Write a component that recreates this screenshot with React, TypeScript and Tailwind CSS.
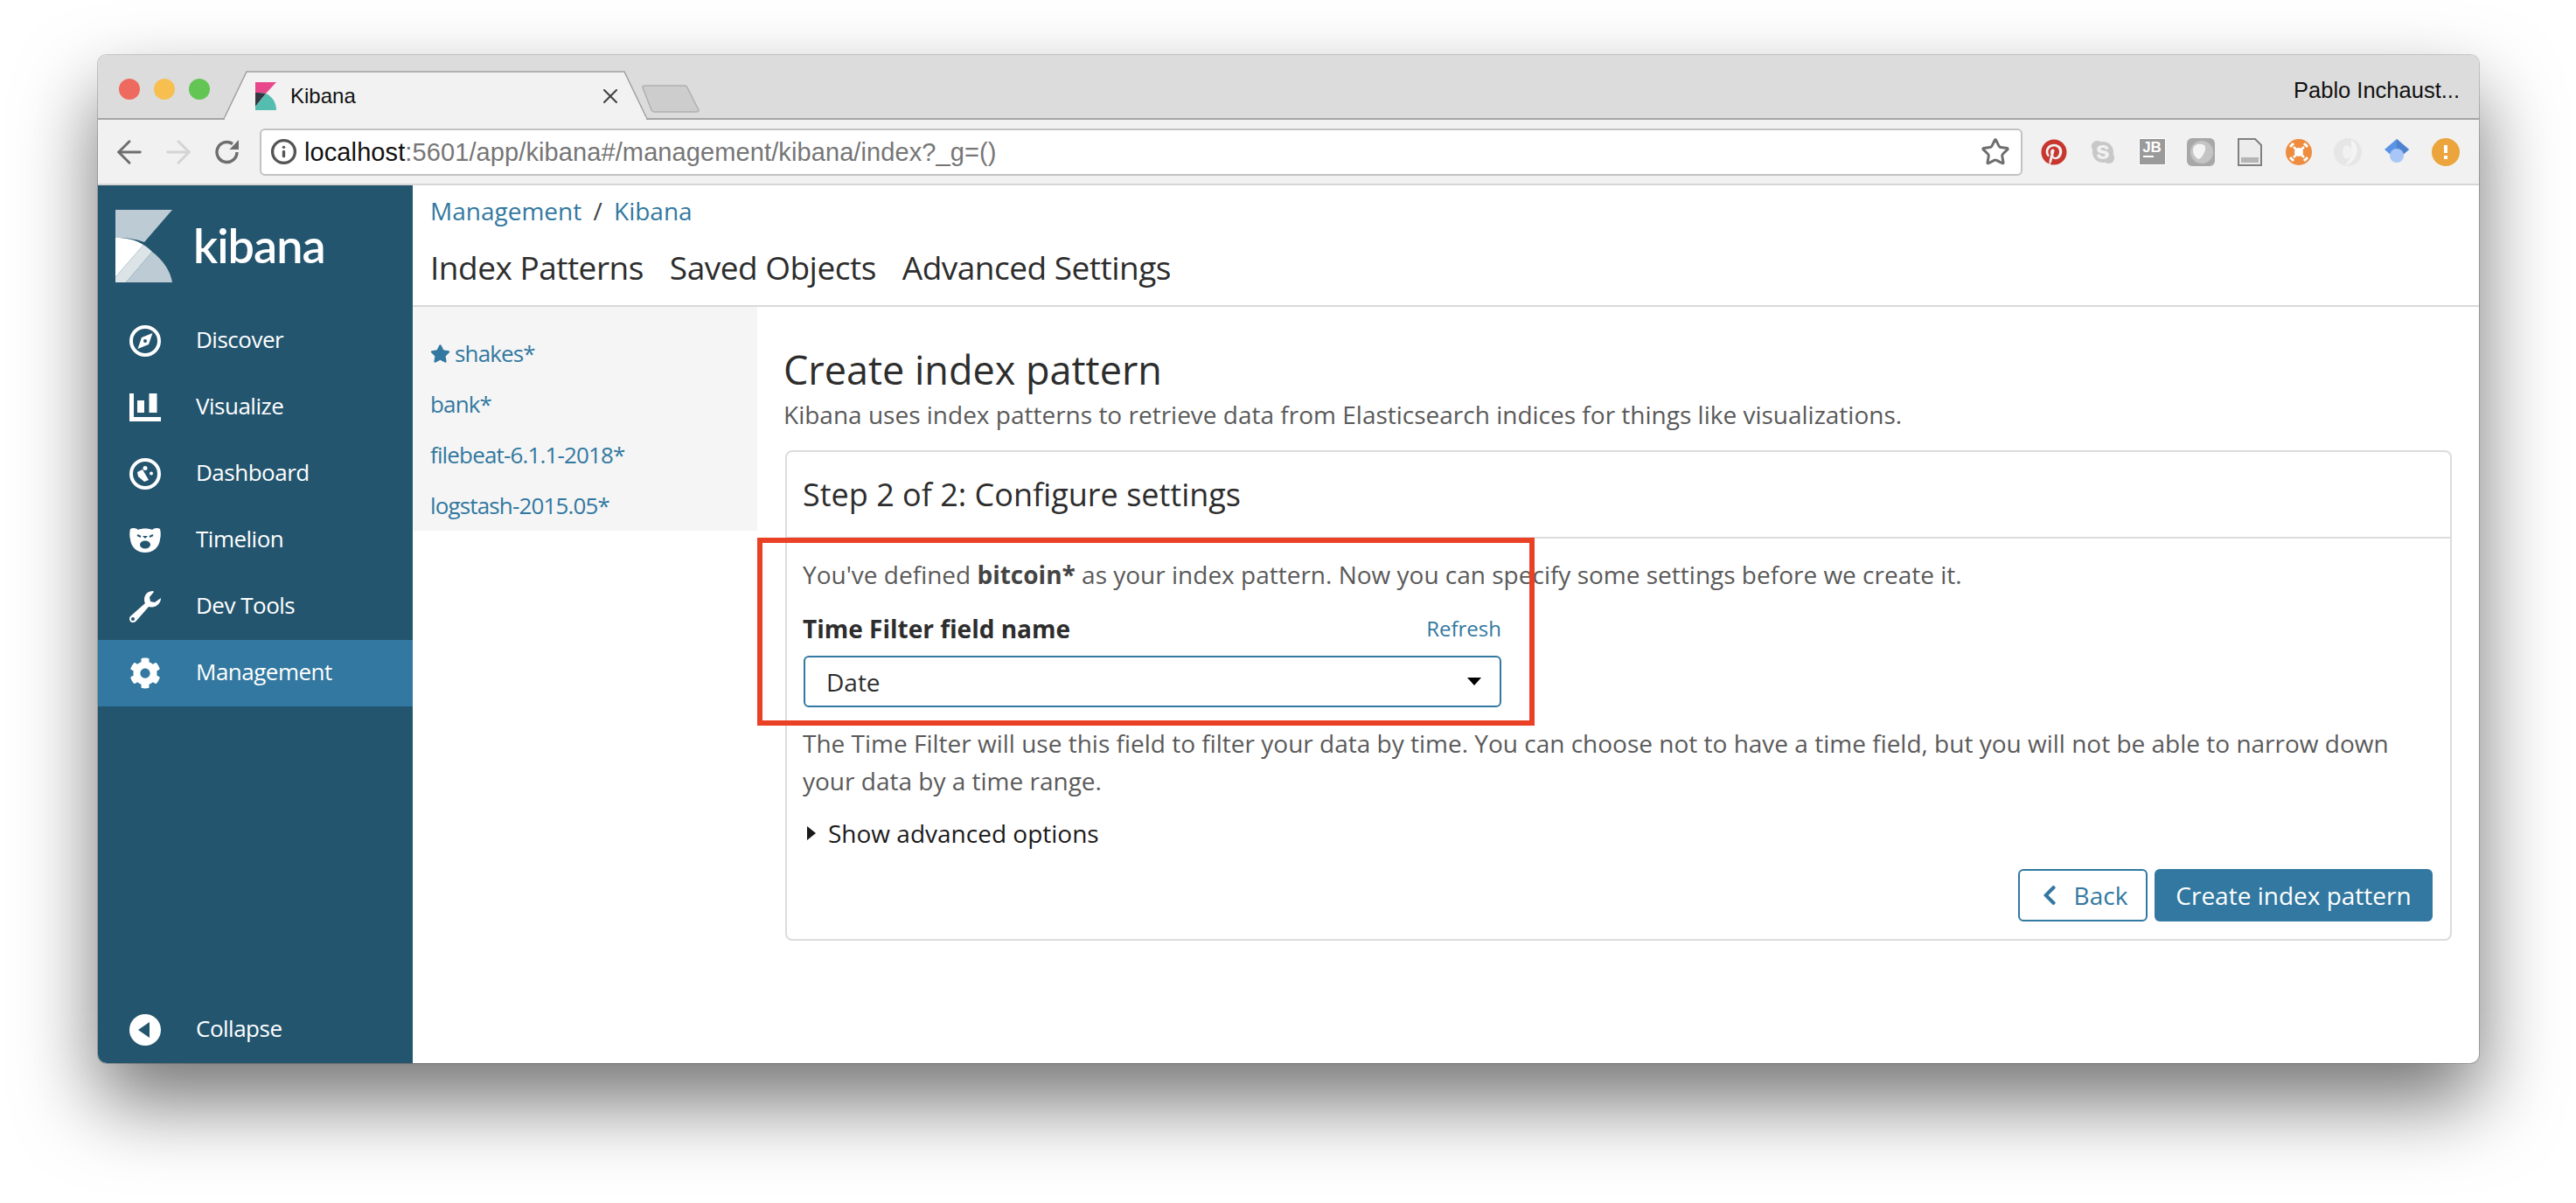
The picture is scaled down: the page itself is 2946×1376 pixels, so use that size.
import { ArrowLeft, ArrowRight, Info, Star, X } from "lucide-react"
import { FaStar, FaCog, FaChevronLeft, FaPinterest, FaSkype } from "react-icons/fa"

/** Logo K da barra lateral. */
function KibanaLogo() {
  return (
    <svg width="65" height="83" viewBox="0 0 65 83">
      <path d="M0 0H65L33 37C23 33 12 32 0 32Z" fill="#bccbd4" />
      <path d="M0 32C12 32 23 34 32 40L0 77Z" fill="#fff" />
      <path d="M32 40C36 42 39 45 42 48L12 83H0V77Z" fill="#dde4e8" />
      <path d="M42 48C54 57 63 70 65 83H12Z" fill="#bccbd4" />
    </svg>
  )
}

/** Favicon da aba. */
function Favicon() {
  return (
    <svg width="24" height="32" viewBox="0 0 24 32">
      <path d="M0 0H24L12 13C8 12 4 12 0 12Z" fill="#e8488b" />
      <path d="M0 12C4 12 8 12 12 13L0 28Z" fill="#343741" />
      <path d="M12 13C19 16 24 23 24 32H0V28Z" fill="#55bdb0" />
    </svg>
  )
}

function Reload() {
  return (
    <svg width="28" height="28" viewBox="0 0 28 28" fill="none">
      <path d="M20 4.500A11.500 11.500 0 1 0 25 14" stroke="#6e6e6e" strokeWidth="3.400" />
      <path d="M27 0V11H16.500Z" fill="#6e6e6e" />
    </svg>
  )
}

function Compass() {
  return (
    <svg width="36" height="36" viewBox="0 0 36 36" fill="none">
      <circle cx="18" cy="18" r="16" stroke="#fff" strokeWidth="4" />
      <path d="M26.500 9L22 22 9.500 27 14 14Z" fill="#fff" />
      <circle cx="18" cy="18" r="2" fill="#23556f" />
    </svg>
  )
}

function Bars() {
  return (
    <svg width="36" height="32" viewBox="0 0 36 32" fill="#fff">
      <path d="M0 0H5V27H36V32H0Z" />
      <rect x="9" y="8" width="8" height="14" />
      <rect x="22.500" y="0" width="9" height="22" />
    </svg>
  )
}

function Gauge() {
  return (
    <svg width="36" height="36" viewBox="0 0 36 36" fill="none">
      <circle cx="18" cy="18" r="16" stroke="#fff" strokeWidth="4" />
      <circle cx="18" cy="11.500" r="2.500" fill="#fff" />
      <circle cx="25" cy="17.500" r="2" fill="#fff" />
      <path d="M9 16L15 13 22 25 17 27 10 21Z" fill="#fff" />
    </svg>
  )
}

function Bear() {
  return (
    <svg width="36" height="30" viewBox="0 0 36 30">
      <path d="M1 2C4 0 8 1 10 3C15 1 21 1 26 3C28 1 32 0 35 2C36 6 36 10 35 14C34 23 27 29 18 29C9 29 2 23 1 14C0 10 0 6 1 2Z" fill="#fff" />
      <path d="M9 9L13 11M27 9L23 11" stroke="#23556f" strokeWidth="2" />
      <path d="M15 10H21L18 13Z" fill="#23556f" />
      <ellipse cx="18" cy="20" rx="6" ry="4.500" fill="#23556f" />
    </svg>
  )
}

function Wrench2() {
  return (
    <svg width="36" height="36" viewBox="0 0 36 36" fill="#fff">
      <path d="M27 0C21 0 17 4 17 10C17 12 17.500 13 18 14L1 29C-1 31 0 36 4 36C6 36 7 35 8 34L22 18C29 20 36 15 36 8L29 13 24 12 23 7 28 1Z" />
      <circle cx="4" cy="32" r="2" fill="#23556f" />
    </svg>
  )
}

function SideItem({ icon, text, active }: { icon: React.ReactNode; text: string; active?: boolean }) {
  return (
    <div className={active ? "h-[76px] flex items-center bg-[#3278a0]" : "h-[76px] flex items-center"}>
      <div className="w-[36px] ml-[36px] flex justify-center">{icon}</div>
      <span className="ml-[40px] mb-[3px] text-[26px] tracking-[-0.5px] text-white">{text}</span>
    </div>
  )
}

function Tab({ text }: { text: string }) {
  return <span className="text-[37px] leading-[50px] tracking-[-0.5px] text-[#2d2d2d]">{text}</span>
}

function Ext({ children }: { children: React.ReactNode }) {
  return <div className="w-[56px] h-[34px] flex items-center justify-center">{children}</div>
}

export default function App() {
  return (
    <div className="w-[2946px] h-[1376px] bg-white overflow-hidden pt-[63px] pl-[112px] font-['Open_Sans',sans-serif]">
      {/* Janela do navegador */}
      <div className="relative w-[2723px] h-[1153px] rounded-[10px] overflow-hidden flex flex-col bg-white shadow-[0_44px_90px_rgba(0,0,0,0.55),0_0_0_1px_rgba(0,0,0,0.18)]">
        {/* Barra de abas */}
        <div className="h-[74px] shrink-0 bg-[#dcdcdc] border-b-2 border-[#a5a5a5] relative font-['Liberation_Sans',sans-serif]">
          <div className="absolute left-[24px] top-[27px] flex gap-[16px]">
            <div className="w-[24px] h-[24px] rounded-full bg-[#ef6a5e]" />
            <div className="w-[24px] h-[24px] rounded-full bg-[#f6bf50]" />
            <div className="w-[24px] h-[24px] rounded-full bg-[#62c554]" />
          </div>
          {/* Aba ativa */}
          <svg className="absolute left-[143px] top-[18px]" width="490" height="56" viewBox="0 0 490 56">
            <path d="M1 55L27 1H459L485 55" fill="#f2f2f2" stroke="#a0a0a0" strokeWidth="1.500" />
            <rect x="2" y="53" width="482" height="3" fill="#f2f2f2" />
          </svg>
          <svg className="absolute left-[622px] top-[34px]" width="66" height="32" viewBox="0 0 66 32">
            <path d="M1 3Q1 1 3 1H49Q51 1 52 3L65 29Q65 31 62 31H14Q12 31 11 29Z" fill="#cdcdcd" stroke="#b0b0b0" strokeWidth="1.500" />
          </svg>
          <div className="absolute left-[180px] top-[31px]"><Favicon /></div>
          <span className="absolute left-[220px] top-[32px] text-[24px] leading-[30px] text-[#111]">Kibana</span>
          <X className="absolute left-[572px] top-[33px] text-[#444]" size={28} strokeWidth={1.800} />
          <span className="absolute right-[22px] top-[25px] text-[25.500px] leading-[30px] text-[#111]">Pablo Inchaust...</span>
        </div>

        {/* Barra de endereço */}
        <div className="h-[75px] shrink-0 bg-[#f1f1f1] border-b-2 border-[#d6d6d6] flex items-center">
          <div className="ml-[8px] w-[56px] flex justify-center"><ArrowLeft className="text-[#6e6e6e]" size={42} strokeWidth={1.700} /></div>
          <div className="w-[56px] flex justify-center"><ArrowRight className="text-[#d4d4d4]" size={42} strokeWidth={1.700} /></div>
          <div className="w-[56px] flex justify-center"><Reload /></div>
          <div className="ml-[9px] w-[2016px] h-[54px] shrink-0 bg-white rounded-[6px] border-2 border-[#c2c2c2] flex items-center pl-[10px] pr-[12px]">
            <Info className="text-[#555]" size={31} strokeWidth={2.600} />
            <span className="ml-[8px] mt-[2px] text-[29px] tracking-[0.1px] font-['Liberation_Sans',sans-serif] text-[#111]">
              localhost<span className="text-[#767676]">:5601/app/kibana#/management/kibana/index?_g=()</span>
            </span>
            <Star className="ml-auto text-[#6e6e6e]" size={34} strokeWidth={2.100} />
          </div>
          <div className="ml-[8px] flex shrink-0">
            <Ext><FaPinterest className="text-[#c8372d]" size={30} /></Ext>
            <Ext><FaSkype className="text-[#c8c8c8]" size={30} /></Ext>
            <Ext>
              <div className="w-[31px] h-[31px] bg-[#9a9a9a] border border-white text-white text-[17px] font-bold font-['Liberation_Sans',sans-serif] leading-[19px] text-center">
                JB
                <div className="ml-[4px] w-[12px] h-[2px] bg-white" />
              </div>
            </Ext>
            <Ext>
              <svg width="32" height="32" viewBox="0 0 32 32">
                <rect width="32" height="32" rx="6" fill="#a8a8a8" />
                <circle cx="17" cy="16" r="13" fill="#c4c4c4" />
                <path d="M7 14C7 8 12 6 17 7C23 8 22 14 18 20C16 23 14 24 13 24C10 22 7 19 7 14Z" fill="#f4f4f4" />
              </svg>
            </Ext>
            <Ext>
              <svg width="28" height="32" viewBox="0 0 28 32">
                <path d="M1 1H20L27 8V31H1Z" fill="#ececec" stroke="#808080" strokeWidth="2" />
                <rect x="4" y="22" width="20" height="6" fill="#b5b5b5" />
              </svg>
            </Ext>
            <Ext>
              <svg width="30" height="30" viewBox="0 0 30 30">
                <circle cx="15" cy="15" r="15" fill="#ee8c3f" />
                <circle cx="15" cy="15" r="5" fill="#fff" />
                <path d="M9 9L21 21M21 9L9 21" stroke="#fff" strokeWidth="2.500" />
                <path d="M5 9L9 5M21 5L25 9M5 21L9 25M21 25L25 21" stroke="#fff" strokeWidth="3" />
              </svg>
            </Ext>
            <Ext>
              <svg width="32" height="32" viewBox="0 0 32 32">
                <circle cx="16" cy="16" r="16" fill="#e6e6e6" />
                <path d="M20 2C27 6 28 14 25 21C22 27 17 31 12 31C18 27 21 20 20 14C20 9 20 5 20 2Z" fill="#f4f4f4" />
                <ellipse cx="15" cy="16" rx="5" ry="8" fill="#f1f1f1" />
              </svg>
            </Ext>
            <Ext>
              <svg width="28" height="30" viewBox="0 0 28 30">
                <path d="M14 0L28 12 14 24 0 12Z" fill="#5b93e6" />
                <path d="M14 0L28 12 14 24Z" fill="#4f82cf" />
                <circle cx="14" cy="19" r="8" fill="#a8c6f6" />
              </svg>
            </Ext>
            <Ext>
              <svg width="32" height="32" viewBox="0 0 32 32">
                <circle cx="16" cy="16" r="16" fill="#eba53c" />
                <rect x="14" y="8" width="4" height="9" fill="#fff" />
                <rect x="14" y="20" width="4" height="4" fill="#fff" />
              </svg>
            </Ext>
          </div>
        </div>

        {/* Aplicação */}
        <div className="flex flex-1 min-h-0">
          {/* Barra lateral */}
          <aside className="w-[360px] shrink-0 bg-[#23556f] flex flex-col">
            <div className="h-[140px] shrink-0 flex items-start pl-[20px] pt-[28px]">
              <KibanaLogo />
              <span className="ml-[24px] mt-[11px] text-[54px] leading-[60px] tracking-[-1px] font-semibold text-white font-['Lato',sans-serif]">kibana</span>
            </div>
            <SideItem icon={<Compass />} text="Discover" />
            <SideItem icon={<Bars />} text="Visualize" />
            <SideItem icon={<Gauge />} text="Dashboard" />
            <SideItem icon={<Bear />} text="Timelion" />
            <SideItem icon={<Wrench2 />} text="Dev Tools" />
            <SideItem icon={<FaCog className="text-white" size={36} />} text="Management" active />
            <div className="mt-auto h-[76px] flex items-center">
              <div className="w-[36px] ml-[36px] h-[36px] rounded-full bg-white flex items-center justify-center">
                <div className="w-0 h-0 mr-[3px] border-y-[9px] border-y-transparent border-r-[13px] border-r-[#23556f]" />
              </div>
              <span className="ml-[40px] mb-[3px] text-[26px] tracking-[-0.5px] text-white">Collapse</span>
            </div>
          </aside>

          {/* Conteúdo */}
          <main className="flex-1 min-w-0 flex flex-col">
            <div className="h-[139px] shrink-0 border-b-2 border-[#d9d9d9] pl-[20px] pt-[10px]">
              <div className="text-[28px] leading-[38px] text-[#3278a0]">
                Management <span className="mx-[6px] text-[#444]">/</span> Kibana
              </div>
              <div className="mt-[21px] flex gap-[30px]">
                <Tab text="Index Patterns" />
                <Tab text="Saved Objects" />
                <Tab text="Advanced Settings" />
              </div>
            </div>

            <div className="flex flex-1 min-h-0">
              {/* Lista de padrões */}
              <div className="w-[394px] h-[256px] shrink-0 bg-[#f5f5f5] pl-[20px] pt-[34px] flex flex-col gap-[19px] text-[26px] leading-[39px] tracking-[-0.85px] text-[#3278a0]">
                <div className="flex items-center"><FaStar className="mr-[5px]" size={23} />shakes*</div>
                <div>bank*</div>
                <div>filebeat-6.1.1-2018*</div>
                <div>logstash-2015.05*</div>
              </div>

              {/* Formulário */}
              <div className="flex-1 min-w-0 pl-[32px] pr-[31px] pt-[42px]">
                <h1 className="-ml-[2px] text-[45px] leading-[60px] text-[#2d2d2d]">Create index pattern</h1>
                <p className="-ml-[2px] mt-[2px] text-[28px] leading-[38px] text-[#5a5a5a]">Kibana uses index patterns to retrieve data from Elasticsearch indices for things like visualizations.</p>

                <div className="mt-[22px] h-[561px] border-2 border-[#dcdcdc] rounded-[8px] flex flex-col">
                  <div className="h-[99px] shrink-0 border-b-2 border-[#dcdcdc] flex items-center pl-[18px] text-[36px] text-[#2d2d2d]">Step 2 of 2: Configure settings</div>
                  <div className="flex-1 pl-[18px] pr-[20px] pt-[22px] text-[#5a5a5a]">
                    <p className="text-[28px] leading-[38px]">You've defined <b className="text-[#444]">bitcoin*</b> as your index pattern. Now you can specify some settings before we create it.</p>
                    <div className="mt-[24px] w-[799px] flex items-center justify-between">
                      <span className="text-[28px] leading-[38px] font-bold text-[#2d2d2d]">Time Filter field name</span>
                      <span className="text-[24px] text-[#3278a0]">Refresh</span>
                    </div>
                    <div className="mt-[12px] ml-[1px] w-[798px] h-[59px] border-2 border-[#3278a0] rounded-[6px] flex items-center pl-[24px] pr-[21px]">
                      <span className="text-[28px] text-[#2d2d2d]">Date</span>
                      <div className="ml-auto w-0 h-0 border-x-[8px] border-x-transparent border-t-[9px] border-t-black" />
                    </div>
                    <p className="mt-[20px] text-[28px] leading-[43px]">The Time Filter will use this field to filter your data by time. You can choose not to have a time field, but you will not be able to narrow down your data by a time range.</p>
                    <div className="mt-[19px] flex items-center text-[28px] leading-[38px] text-[#1a1a1a]">
                      <div className="ml-[5px] w-0 h-0 border-y-[8px] border-y-transparent border-l-[10px] border-l-[#1a1a1a]" />
                      <span className="ml-[14px]">Show advanced options</span>
                    </div>
                    <div className="mt-[22px] flex justify-end gap-[8px]">
                      <button className="w-[148px] h-[60px] rounded-[6px] border-2 border-[#3278a0] bg-white text-[#3278a0] text-[28px] flex items-center justify-center gap-[15px]">
                        <FaChevronLeft size={26} />Back
                      </button>
                      <button className="w-[318px] h-[60px] rounded-[6px] bg-[#3278a0] text-white text-[28px]">Create index pattern</button>
                    </div>
                  </div>
                </div>
              </div>
            </div>
          </main>
        </div>

        {/* Destaque vermelho sobreposto */}
        <div className="absolute left-[754px] top-[552px] w-[889px] h-[215px] border-[6px] border-[#ea4026]" />
      </div>
    </div>
  )
}
